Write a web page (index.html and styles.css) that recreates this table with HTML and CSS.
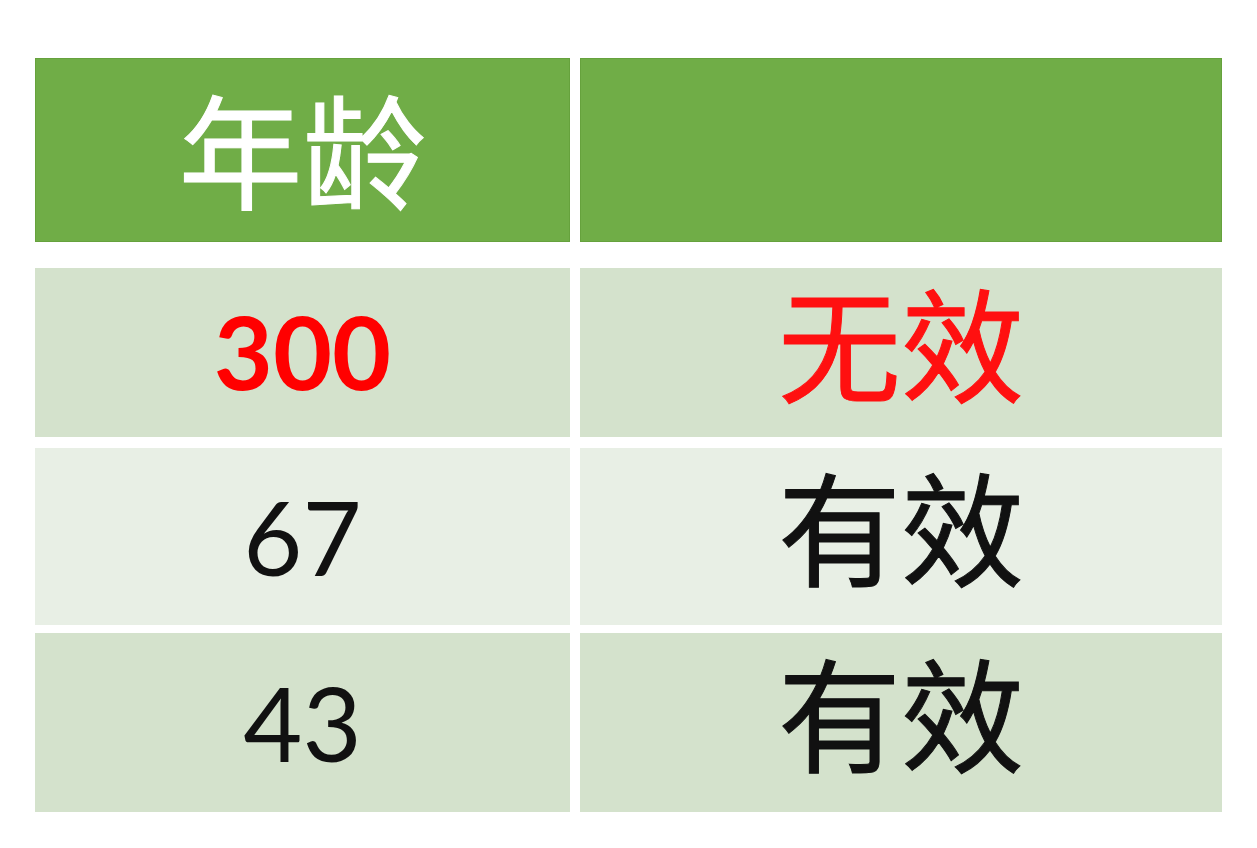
FILE: index.html
```html
<!DOCTYPE html>
<html lang="zh-CN">
<head>
<meta charset="utf-8">
<title>年龄</title>
<link rel="stylesheet" href="styles.css">
</head>
<body>
<div class="table">
  <div class="row head">
    <div class="cell">年龄</div>
    <div class="cell"></div>
  </div>
  <div class="row band r1">
    <div class="cell num bad">300</div>
    <div class="cell cjk bad">无效</div>
  </div>
  <div class="row light r2">
    <div class="cell num">67</div>
    <div class="cell cjk">有效</div>
  </div>
  <div class="row band r3">
    <div class="cell num">43</div>
    <div class="cell cjk">有效</div>
  </div>
</div>
</body>
</html>
```
FILE: styles.css
```css
html, body {
  margin: 0;
  padding: 0;
  background: #ffffff;
}
body {
  width: 1257px;
  height: 848px;
  overflow: hidden;
  font-family: "Noto Sans CJK SC", "Noto Sans", sans-serif;
}
.table {
  display: flex;
  flex-direction: column;
  padding: 58px 0 0 35px;
}
.row {
  display: grid;
  grid-template-columns: 535px 642px;
  column-gap: 10px;
}
.cell {
  display: flex;
  align-items: center;
  justify-content: center;
  line-height: 1;
}
.head { height: 184px; }
.head .cell {
  background: #70ad47;
  color: #ffffff;
  font-size: 124px;
  font-weight: 400;
  -webkit-text-stroke: 1px #ffffff;
  padding-bottom: 8px;
  box-shadow: inset 0 0 0 1px #66a23d;
}
.r1 { height: 169px; margin-top: 26px; }
.r2 { height: 177px; margin-top: 11px; }
.r3 { height: 179px; margin-top: 8px; }
.band .cell { background: #d4e2cc; }
.light .cell { background: #e8efe5; }
.cell.num {
  font-family: Lato, "Liberation Sans", sans-serif;
  font-size: 102px;
  color: #111111;
}
.cell.cjk {
  font-size: 123px;
  font-weight: 400;
  color: #111111;
  -webkit-text-stroke: 1px #111111;
  padding-bottom: 26px;
}
.cell.num.bad {
  font-weight: 700;
  color: #ff0000;
  padding-bottom: 4px;
}
.cell.cjk.bad {
  color: #ff1010;
  -webkit-text-stroke: 1px #ff1010;
}
```
